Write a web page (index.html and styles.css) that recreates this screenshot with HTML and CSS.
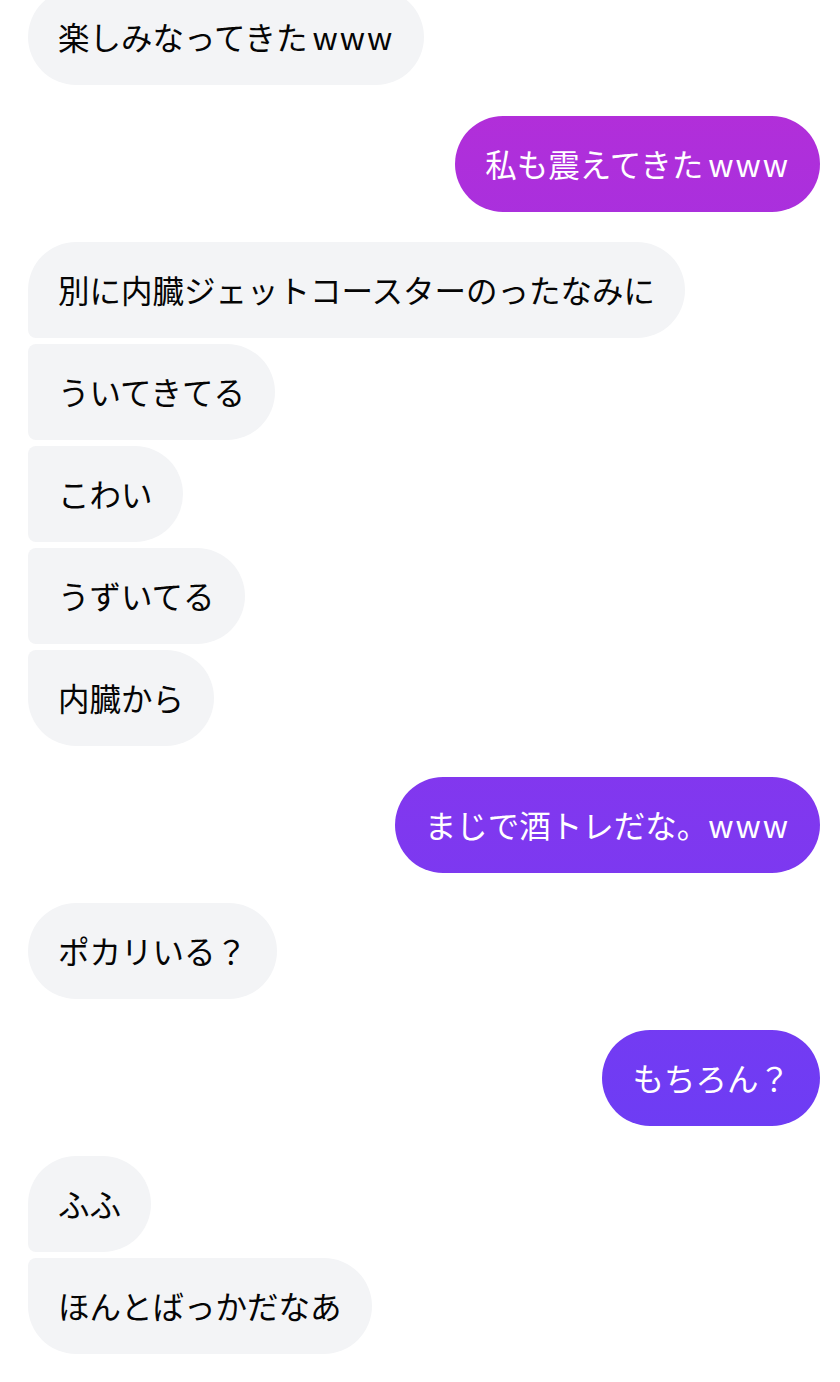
FILE: index.html
```html
<!DOCTYPE html>
<html lang="ja">
<head>
  <meta charset="UTF-8">
  <title>Chat</title>
  <link rel="stylesheet" href="styles.css">
</head>
<body>

  <div class="chat">
    <div class="group in">
      <div class="msg">楽しみなってきた<span class="en sp">www</span></div>
    </div>

    <div class="group out">
      <div class="msg">私も震えてきた<span class="en sp">www</span></div>
    </div>

    <div class="group in">
      <div class="msg">別に内臓ジェットコースターのったなみに</div>
      <div class="msg">ういてきてる</div>
      <div class="msg">こわい</div>
      <div class="msg">うずいてる</div>
      <div class="msg">内臓から</div>
    </div>

    <div class="group out">
      <div class="msg">まじで酒トレだな。<span class="en">www</span></div>
    </div>

    <div class="group in">
      <div class="msg">ポカリいる？</div>
    </div>

    <div class="group out">
      <div class="msg">もちろん？</div>
    </div>

    <div class="group in">
      <div class="msg">ふふ</div>
      <div class="msg">ほんとばっかだなあ</div>
    </div>
  </div>

</body>
</html>
```

FILE: styles.css
```css
body {
  font-family: "Noto Sans CJK JP", "Noto Sans", sans-serif;
  background-color: #FFFFFF;
  color: #050505;
  margin: 0;
  padding: 0;
  overflow: hidden;
}

.chat {
  display: flex;
  flex-direction: column;
  gap: 30.5px;
  margin-top: -11px;
  padding: 0 20px 0 28px;
}

.group {
  display: flex;
  flex-direction: column;
  gap: 6px;
}

.group.in {
  align-items: flex-start;
}

.group.out {
  align-items: flex-end;
}

.msg {
  font-size: 31.5px;
  line-height: 48px;
  padding: 23px 30px 25px;
  border-radius: 48px;
  white-space: nowrap;
}

.en {
  letter-spacing: 2px;
}

.en.sp {
  margin-left: 5px;
}

.in .msg {
  background-color: #F3F4F6;
  color: #050505;
}

/* joined corners inside a run of received messages */
.in .msg:not(:last-child) {
  border-bottom-left-radius: 8px;
}

.in .msg:not(:first-child) {
  border-top-left-radius: 8px;
}

.out .msg {
  color: #FFFFFF;
  background: linear-gradient(180deg, #BA2DD5 0%, #8B35EC 45%, #5F40F8 100%) fixed;
}
```
